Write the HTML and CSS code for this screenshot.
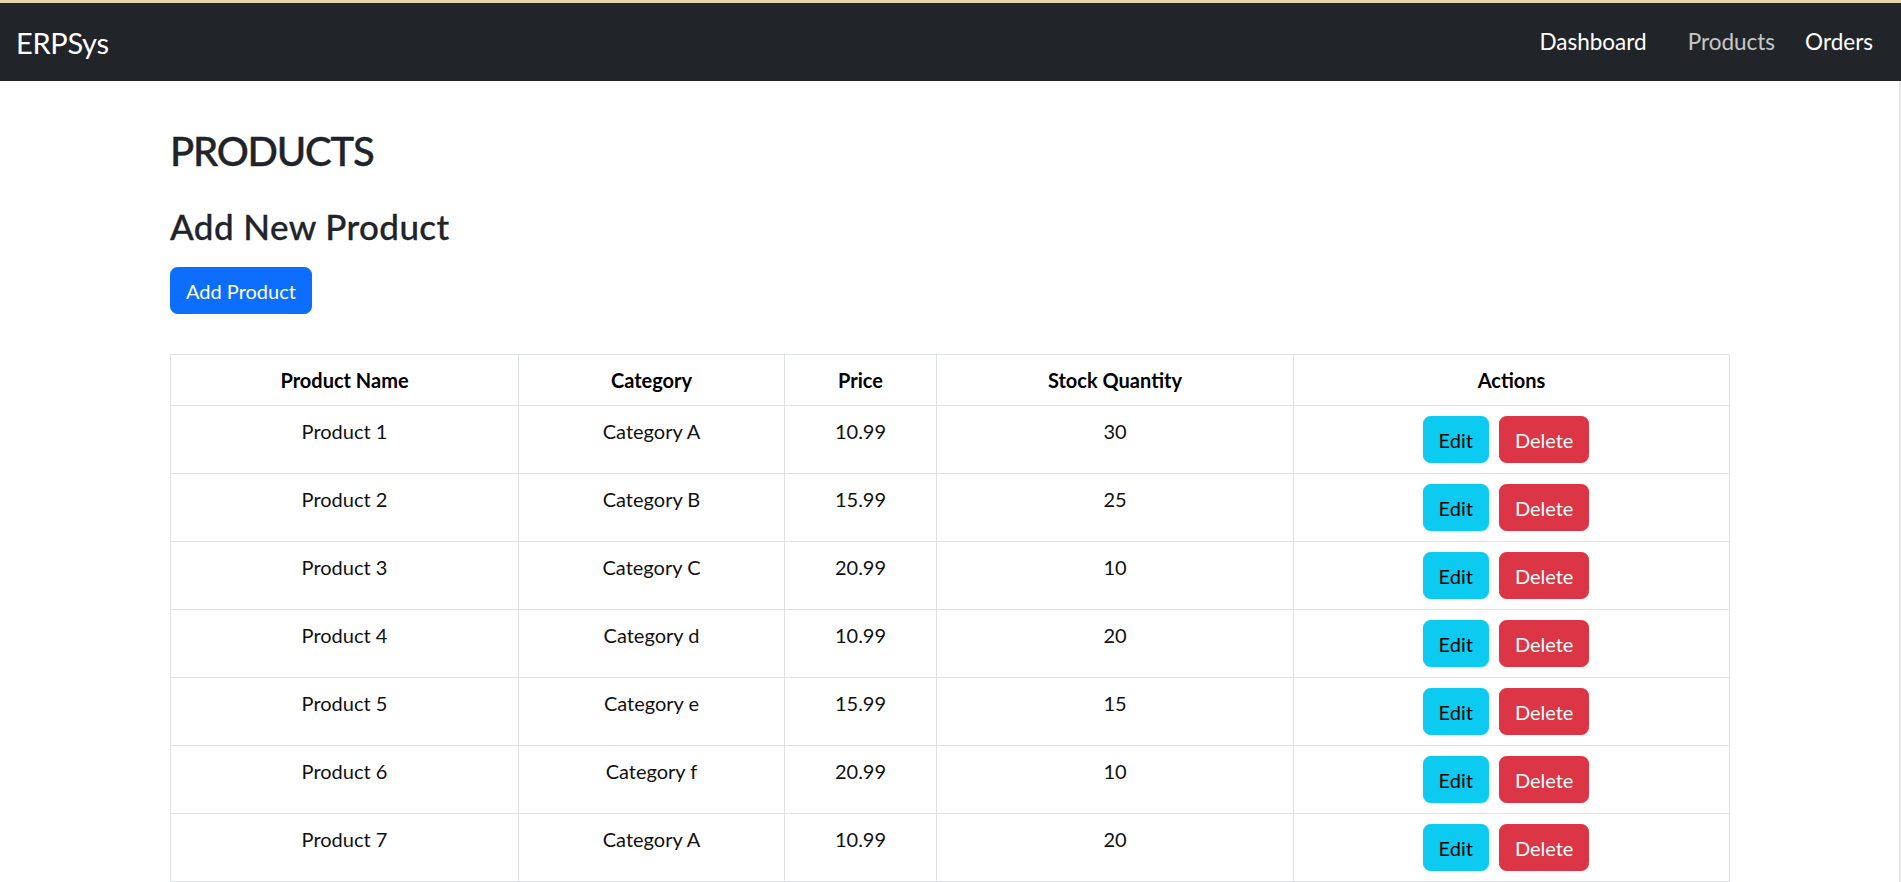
FILE: index.html
```html
<!DOCTYPE html>
<html lang="en">
<head>
<meta charset="utf-8">
<title>ERPSys - Products</title>
<link rel="stylesheet" href="styles.css">
</head>
<body>
<nav class="navbar">
  <a class="brand" href="#">ERPSys</a>
  <ul class="nav">
    <li><a class="nav-link" href="#">Dashboard</a></li>
    <li><a class="nav-link nav-link-muted" href="#">Products</a></li>
    <li><a class="nav-link nav-link-last" href="#">Orders</a></li>
  </ul>
</nav>
<main class="page">
  <div class="container">
    <h2 class="title">PRODUCTS</h2>
    <h3 class="subtitle">Add New Product</h3>
    <button class="btn btn-primary">Add Product</button>
    <table class="table">
      <colgroup>
        <col class="c1"><col class="c2"><col class="c3"><col class="c4"><col class="c5">
      </colgroup>
      <thead>
        <tr><th>Product Name</th><th>Category</th><th>Price</th><th>Stock Quantity</th><th>Actions</th></tr>
      </thead>
      <tbody>
        <tr><td>Product 1</td><td>Category A</td><td>10.99</td><td>30</td><td><div class="actions"><button class="btn btn-info">Edit</button><button class="btn btn-danger">Delete</button></div></td></tr>
        <tr><td>Product 2</td><td>Category B</td><td>15.99</td><td>25</td><td><div class="actions"><button class="btn btn-info">Edit</button><button class="btn btn-danger">Delete</button></div></td></tr>
        <tr><td>Product 3</td><td>Category C</td><td>20.99</td><td>10</td><td><div class="actions"><button class="btn btn-info">Edit</button><button class="btn btn-danger">Delete</button></div></td></tr>
        <tr><td>Product 4</td><td>Category d</td><td>10.99</td><td>20</td><td><div class="actions"><button class="btn btn-info">Edit</button><button class="btn btn-danger">Delete</button></div></td></tr>
        <tr><td>Product 5</td><td>Category e</td><td>15.99</td><td>15</td><td><div class="actions"><button class="btn btn-info">Edit</button><button class="btn btn-danger">Delete</button></div></td></tr>
        <tr><td>Product 6</td><td>Category f</td><td>20.99</td><td>10</td><td><div class="actions"><button class="btn btn-info">Edit</button><button class="btn btn-danger">Delete</button></div></td></tr>
        <tr><td>Product 7</td><td>Category A</td><td>10.99</td><td>20</td><td><div class="actions"><button class="btn btn-info">Edit</button><button class="btn btn-danger">Delete</button></div></td></tr>
      </tbody>
    </table>
  </div>
</main>
</body>
</html>
```
FILE: styles.css
```css
html, body {
  margin: 0;
  padding: 0;
  overflow: hidden;
  height: 100%;
}
body {
  font-family: Lato, "Open Sans", "Liberation Sans", sans-serif;
  font-size: 20px;
  line-height: 1.5;
  color: #212529;
  background: #fff;
}
.navbar {
  display: flex;
  align-items: center;
  justify-content: space-between;
  height: 78px;
  border-top: 3px solid #e4d2ae;
  background: #212529;
  padding: 0 28px 0 16px;
}
.brand {
  color: #fff;
  text-decoration: none;
  font-size: 29px;
  line-height: 1;
  margin-top: 1px;
  letter-spacing: -0.3px;
}
.nav {
  display: flex;
  list-style: none;
  margin: 0;
  padding: 0;
  align-items: center;
}
.nav-link {
  display: block;
  color: #fff;
  text-decoration: none;
  font-size: 22.5px;
  line-height: 1;
  margin-left: 30px;
}
.nav li:nth-child(2) .nav-link {
  margin-left: 41px;
}
.nav-link-muted {
  color: rgba(255, 255, 255, 0.75);
}
.page {
  display: block;
  min-height: calc(100vh - 81px);
  border-right: 2px solid #e6e6e6;
}
.container {
  padding: 46px 0 0 170px;
}
.title {
  margin: 0;
  font-size: 40px;
  line-height: 48px;
  font-weight: 500;
  letter-spacing: -1.2px;
  -webkit-text-stroke: 0.4px #212529;
}
.subtitle {
  margin: 30px 0 0;
  font-size: 35px;
  line-height: 42px;
  font-weight: 500;
  letter-spacing: 0.4px;
  -webkit-text-stroke: 0.3px #212529;
}
.btn {
  display: inline-block;
  font-family: inherit;
  font-size: 20px;
  line-height: 30px;
  padding: 7.5px 15px;
  border: 1px solid transparent;
  border-radius: 7.5px;
  cursor: pointer;
}
.btn-primary {
  margin-top: 20px;
  background: #0d6efd;
  border-color: #0d6efd;
  color: #fff;
}
.btn-info {
  background: #0dcaf0;
  border-color: #0dcaf0;
  color: #000;
}
.btn-danger {
  background: #dc3545;
  border-color: #dc3545;
  color: #fff;
}
.table {
  margin-top: 40px;
  width: 1559px;
  table-layout: fixed;
  border-collapse: collapse;
  border: 1px solid #dee2e6;
}
.c1 { width: 348px; }
.c2 { width: 266px; }
.c3 { width: 152px; }
.c4 { width: 357px; }
.c5 { width: 436px; }
.table th,
.table td {
  border: 1px solid #dee2e6;
  padding: 10px;
  text-align: center;
  vertical-align: top;
  line-height: 30px;
}
.table th {
  font-weight: 700;
  color: #000;
}
.table td {
  color: #111;
}
.actions {
  display: flex;
  justify-content: center;
  gap: 10px;
  padding-right: 11px;
}
```
